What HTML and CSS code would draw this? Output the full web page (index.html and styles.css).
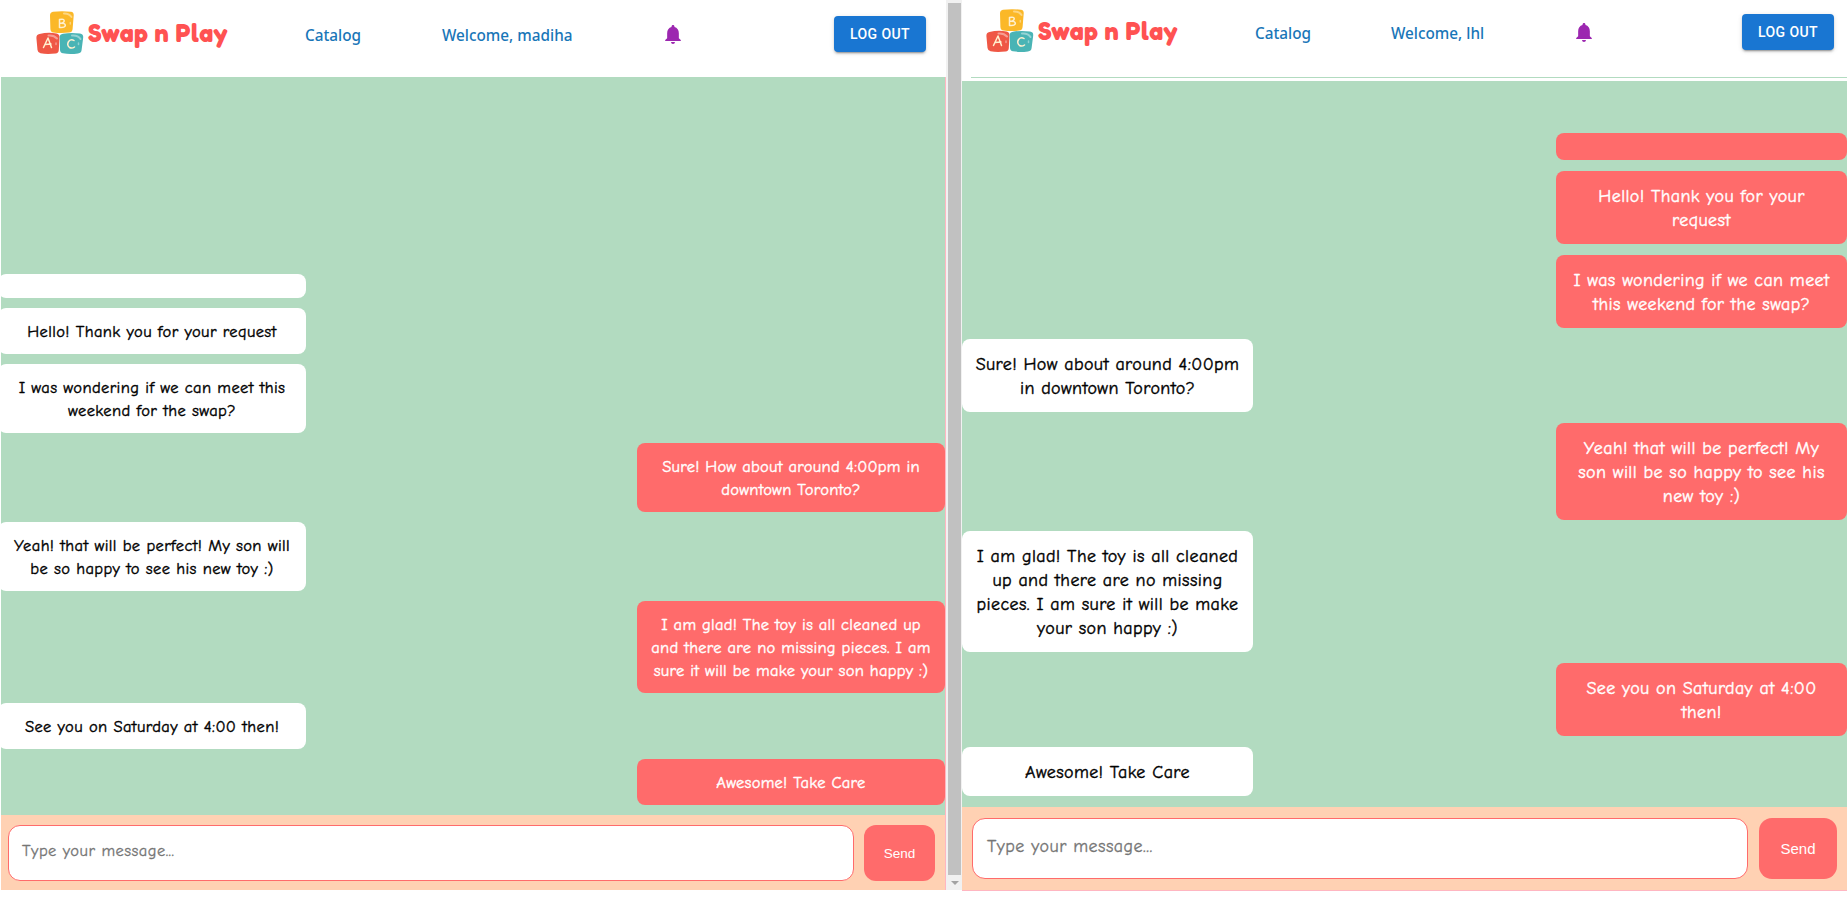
FILE: index.html
```html
<!DOCTYPE html>
<html lang="en">
<head>
<meta charset="utf-8">
<title>Swap n Play</title>
<link rel="stylesheet" href="styles.css">
</head>
<body>
<svg width="0" height="0" class="defs">
  <symbol id="blocks" viewBox="0 0 48 44">
    <path d="M17 .8Q26-.5 35 .8Q38 1.2 37.7 4.5L36.6 18Q36.2 21.5 33 21.6Q25 22.5 17.5 21.5Q14.6 21.2 14.4 18L14 4.5Q14 1.3 17 .8Z" fill="#fbb828"/>
    <path d="M3.5 23Q12 21 20.500 22.500Q23.500 23 23.500 26L22.800 39Q22.600 42.200 19.500 42.500Q11 43.500 4.500 42.300Q2 42 1.500 39L.4 27Q.2 23.700 3.500 23Z" fill="#ef5745"/>
    <path d="M27 22.700Q35 21.200 44 22.500Q47.500 23 47.200 26.500L45.600 39Q45.200 42.200 42 42.400Q34 43.500 27 42.300Q24.200 42 24 39L23.700 26Q23.700 23.200 27 22.700Z" fill="#49b4b5"/>
    <g fill="none" stroke-linecap="round" stroke-linejoin="round">
      <path d="M28 2.500Q33 2.300 35.500 6M12.500 24.500Q18 24 21 27.500M36 24.500Q42 24 44.500 28" stroke="#fff" stroke-opacity=".42" stroke-width="2"/>
      <path d="M34.300 11.500v1.500M20 32v1.500M42.500 32v1.500" stroke="#fff" stroke-opacity=".4" stroke-width="1.500"/>
      <path d="M23.500 8.500V16.500M23.500 8.500Q28.500 7.500 28.200 10Q28 12 24 12.200Q29.500 12 29.300 14.500Q29 17 23.500 16.500M7.500 36.500L12 27L15.500 36.500M9 33.500L15 33M38 29.500Q35 27.500 32.600 30.500Q30.500 34 33.500 36.500Q36 37.800 38.500 36" stroke="#fff0cf" stroke-width="1.500"/>
    </g>
  </symbol>
  <symbol id="bell" viewBox="4 2.500 16 19.500">
    <path d="M12 22c1.100 0 2-.9 2-2h-4c0 1.100.89 2 2 2zm6-6v-5c0-3.070-1.640-5.640-4.500-6.320V4c0-.83-.67-1.500-1.500-1.500s-1.500.67-1.500 1.500v.68C7.630 5.360 6 7.920 6 11v5l-2 2v1h16v-1l-2-2z" fill="#9c27b0"/>
  </symbol>
</svg>
<main class="screens">
  <section class="window window-left">
    <div class="page">
      <header class="navbar">
        <svg class="logo-mark"><use href="#blocks"/></svg>
        <span class="brand">Swap n Play</span>
        <a class="nav-link catalog">Catalog</a>
        <a class="nav-link welcome">Welcome, madiha</a>
        <svg class="bell"><use href="#bell"/></svg>
        <button class="logout">LOG OUT</button>
      </header>
      <div class="chat">
        <div class="bubble received empty"></div>
        <div class="bubble received">Hello! Thank you for your request</div>
        <div class="bubble received">I was wondering if we can meet this<br>weekend for the swap?</div>
        <div class="bubble sent">Sure! How about around 4:00pm in<br>downtown Toronto?</div>
        <div class="bubble received">Yeah! that will be perfect! My son will<br>be so happy to see his new toy :)</div>
        <div class="bubble sent">I am glad! The toy is all cleaned up<br>and there are no missing pieces. I am<br>sure it will be make your son happy :)</div>
        <div class="bubble received">See you on Saturday at 4:00 then!</div>
        <div class="bubble sent">Awesome! Take Care</div>
      </div>
      <div class="composer">
        <div class="field">Type your message...</div>
        <button class="send">Send</button>
      </div>
    </div>
    <div class="scrollbar"><div class="thumb"></div><div class="arrow"></div></div>
  </section>
  <section class="window window-right">
    <div class="page">
      <header class="navbar">
        <svg class="logo-mark"><use href="#blocks"/></svg>
        <span class="brand">Swap n Play</span>
        <a class="nav-link catalog">Catalog</a>
        <a class="nav-link welcome">Welcome, lhl</a>
        <svg class="bell"><use href="#bell"/></svg>
        <button class="logout">LOG OUT</button>
      </header>
      <div class="divider"></div>
      <div class="chat">
        <div class="bubble sent empty"></div>
        <div class="bubble sent">Hello! Thank you for your<br>request</div>
        <div class="bubble sent">I was wondering if we can meet<br>this weekend for the swap?</div>
        <div class="bubble received">Sure! How about around 4:00pm<br>in downtown Toronto?</div>
        <div class="bubble sent">Yeah! that will be perfect! My<br>son will be so happy to see his<br>new toy :)</div>
        <div class="bubble received">I am glad! The toy is all cleaned<br>up and there are no missing<br>pieces. I am sure it will be make<br>your son happy :)</div>
        <div class="bubble sent">See you on Saturday at 4:00<br>then!</div>
        <div class="bubble received">Awesome! Take Care</div>
      </div>
      <div class="composer">
        <div class="field">Type your message...</div>
        <button class="send">Send</button>
      </div>
    </div>
  </section>
</main>
</body>
</html>
```
FILE: styles.css
```css
* { box-sizing: border-box; }
body { margin: 0; background: #fff; overflow: hidden; }
button { border: 0; padding: 0; color: #fff; }
.defs { position: absolute; }
.screens { display: flex; height: 891px; }
.window { display: flex; }
.window-left { width: 962px; height: 890px; padding-left: 1px; }
.window-right { width: 885px; height: 891px; }
.page { display: flex; flex-direction: column; flex: 1; min-width: 0; }
.window-left .page { border-right: 1px solid #ffb6c1; }
.window-right .page { border-bottom: 1px solid #ffb6c1; }

.navbar { display: flex; align-items: flex-start; height: 77px; flex: none; background: #fff; }
.window-left .navbar { padding: 2px 0 0 35px; margin-right: -1px; }
.window-right .navbar { padding-left: 24px; }
.logo-mark { width: 48px; height: 44px; margin-top: 9px; flex: none; }
.brand {
  width: 144px; margin: 16px 0 0 4px; white-space: nowrap;
  font: 700 25px/30px "Fredoka One", Fredoka, "Baloo 2", Lato, sans-serif; color: #ff5252;
  letter-spacing: .5px;
}
.nav-link {
  font: 500 15.3px/22px "Noto Sans", sans-serif; color: #1976b8;
  margin-top: 22px; white-space: nowrap; flex: none;
}
.catalog { width: 137px; margin-left: 73px; }
.welcome { width: 223px; }
.window-right .catalog { width: 136px; }
.window-right .welcome { width: 185px; }
.bell { width: 16px; height: 19px; margin-top: 23px; flex: none; }
.logout {
  width: 92px; height: 36px; margin: 14px 0 0 153px; border-radius: 4px; flex: none;
  background: #1976d2; font: 500 14px/33px Roboto, sans-serif; letter-spacing: .4px;
  box-shadow: 0 3px 1px -2px rgba(0,0,0,.2), 0 2px 2px rgba(0,0,0,.14), 0 1px 5px rgba(0,0,0,.12);
}
.window-right .logout { margin-left: 150px; }
.divider { height: 4px; margin-left: 9px; border-top: 1px solid #b2dbc0; flex: none; }

.chat {
  display: flex; flex-direction: column; justify-content: flex-end; flex: 1;
  gap: 10px; padding-bottom: 10px; background: #b2dbc0;
  font: 16.5px/23px "Comic Sans MS", "Comic Neue", "Noto Sans", sans-serif; letter-spacing: .38px;
  -webkit-text-stroke: .4px currentColor; overflow: hidden;
}
.bubble { width: 308px; padding: 12px 0 11px; border-radius: 8px; text-align: center; white-space: nowrap; }
.received { background: #fff; color: #000; }
.sent { background: #ff6b6b; color: #fff; align-self: flex-end; }
.empty { height: 24px; }
.window-left .received { margin-left: -3px; }
.window-left .sent { letter-spacing: .26px; }
.window-right .chat { gap: 11px; padding-bottom: 11px; font-size: 18px; line-height: 24px; letter-spacing: .4px; }
.window-right .bubble { width: 291px; padding: 13.500px 0 11.500px; }
.window-right .empty { height: 27px; }

.composer { display: flex; gap: 10px; height: 75px; padding: 10px 10px 9px 7px; background: #ffd1b3; flex: none; }
.field {
  flex: 1; padding-left: 13px; border: 1px solid #ff6b6b; border-radius: 12px; background: #fff; letter-spacing: .45px;
  -webkit-text-stroke: .3px currentColor;
  color: #757575; font: 16.5px/50px "Comic Sans MS", "Comic Neue", "Noto Sans", sans-serif;
}
.send { width: 71px; border-radius: 12px; background: #ff6b6b; font: 13.5px "Liberation Sans", sans-serif; }
.window-right .composer { gap: 11px; height: 83px; padding: 11px 10px 11px 10px; }
.window-right .field { border-radius: 13px; font-size: 18px; line-height: 55px; padding-left: 14px; }
.window-right .send { width: 78px; border-radius: 13px; font-size: 15px; }

.scrollbar { display: flex; flex-direction: column; align-items: center; width: 16px; padding: 3px 1px 0 2px; background: #f1f1f1; }
.thumb { width: 13px; height: 872px; background: #c1c1c1; }
.arrow { width: 0; margin-top: 6px; border: 4px solid transparent; border-top-color: #a3a3a3; border-bottom: 0; }
```
